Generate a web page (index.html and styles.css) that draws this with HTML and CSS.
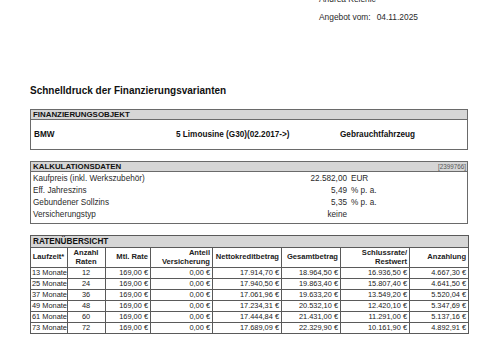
FILE: index.html
```html
<!DOCTYPE html>
<html lang="de">
<head>
<meta charset="utf-8">
<link rel="stylesheet" href="styles.css">
</head>
<body>
<div class="page">
  <div class="meta">
    <div class="name">Andrea Kelenic</div>
    <div class="date"><span>Angebot vom:</span><span class="dval">04.11.2025</span></div>
  </div>
  <h1 class="title">Schnelldruck der Finanzierungsvarianten</h1>

  <section class="box">
    <div class="box-head"><span>FINANZIERUNGSOBJEKT</span></div>
    <div class="obj">
      <span>BMW</span>
      <span>5 Limousine (G30)(02.2017-&gt;)</span>
      <span>Gebrauchtfahrzeug</span>
    </div>
  </section>

  <section class="box">
    <div class="box-head"><span>KALKULATIONSDATEN</span><span class="ref">[2399766]</span></div>
    <div class="calc">
      <span>Kaufpreis (inkl. Werkszubehör)</span><span class="v">22.582,00</span><span>EUR</span>
      <span>Eff. Jahreszins</span><span class="v">5,49</span><span>% p. a.</span>
      <span>Gebundener Sollzins</span><span class="v">5,35</span><span>% p. a.</span>
      <span>Versicherungstyp</span><span class="v">keine</span><span></span>
    </div>
  </section>

  <table class="rates">
    <colgroup>
      <col style="width:37px"><col style="width:38px"><col style="width:45px"><col style="width:62px">
      <col style="width:69px"><col style="width:59px"><col style="width:69px"><col style="width:59px">
    </colgroup>
    <thead>
      <tr><th colspan="8" class="rt">RATENÜBERSICHT</th></tr>
      <tr class="ch">
        <th class="c">Laufzeit*</th>
        <th class="c">Anzahl<br>Raten</th>
        <th>Mtl. Rate</th>
        <th>Anteil<br>Versicherung</th>
        <th>Nettokreditbetrag</th>
        <th>Gesamtbetrag</th>
        <th>Schlussrate/<br>Restwert</th>
        <th>Anzahlung</th>
      </tr>
    </thead>
    <tbody>
      <tr><td class="l">13 Monate</td><td class="c">12</td><td>169,00 €</td><td>0,00 €</td><td>17.914,70 €</td><td>18.964,50 €</td><td>16.936,50 €</td><td>4.667,30 €</td></tr>
      <tr><td class="l">25 Monate</td><td class="c">24</td><td>169,00 €</td><td>0,00 €</td><td>17.940,50 €</td><td>19.863,40 €</td><td>15.807,40 €</td><td>4.641,50 €</td></tr>
      <tr><td class="l">37 Monate</td><td class="c">36</td><td>169,00 €</td><td>0,00 €</td><td>17.061,96 €</td><td>19.633,20 €</td><td>13.549,20 €</td><td>5.520,04 €</td></tr>
      <tr><td class="l">49 Monate</td><td class="c">48</td><td>169,00 €</td><td>0,00 €</td><td>17.234,31 €</td><td>20.532,10 €</td><td>12.420,10 €</td><td>5.347,69 €</td></tr>
      <tr><td class="l">61 Monate</td><td class="c">60</td><td>169,00 €</td><td>0,00 €</td><td>17.444,84 €</td><td>21.431,00 €</td><td>11.291,00 €</td><td>5.137,16 €</td></tr>
      <tr><td class="l">73 Monate</td><td class="c">72</td><td>169,00 €</td><td>0,00 €</td><td>17.689,09 €</td><td>22.329,90 €</td><td>10.161,90 €</td><td>4.892,91 €</td></tr>
    </tbody>
  </table>
</div>
</body>
</html>
```
FILE: styles.css
```css
html, body {
  margin: 0;
  padding: 0;
  background: #fff;
}
body {
  width: 487px;
  height: 341px;
  overflow: hidden;
  font-family: "Liberation Sans", Arial, sans-serif;
  color: #1a1a1a;
}
.page {
  padding: 0 19px 0 30px;
}
.meta {
  margin-top: -6px;
  padding-left: 289px;
  font-size: 8.4px;
  line-height: 10px;
  color: #2a2a2a;
}
.date {
  margin-top: 8px;
  display: flex;
  gap: 6px;
}
.title {
  margin: 63px 0 12px;
  font-size: 10px;
  line-height: 12px;
  font-weight: bold;
  color: #111;
}
.box {
  border: 1px solid #6a6a6a;
  margin-bottom: 11px;
}
.box-head {
  height: 9px;
  background: #d6d6d6;
  border-bottom: 1px solid #6a6a6a;
  display: flex;
  justify-content: space-between;
  align-items: center;
  padding: 0 1px 0 2px;
  font-size: 7.9px;
  font-weight: bold;
  line-height: 9px;
  color: #111;
}
.ref {
  font-size: 6.3px;
  font-weight: normal;
  color: #555;
}
.obj {
  height: 29px;
  display: grid;
  grid-template-columns: 142px 164px 1fr;
  align-items: center;
  padding-left: 3px;
  font-size: 8.2px;
  font-weight: bold;
  color: #111;
}
.calc {
  display: grid;
  grid-template-columns: 226px 84px 1fr;
  column-gap: 4px;
  padding: 1px 0 2px 2px;
  font-size: 8.2px;
  line-height: 12px;
  color: #2a2a2a;
}
.calc .v {
  text-align: right;
}
.rates {
  width: 438px;
  table-layout: fixed;
  border-collapse: collapse;
  border: 1px solid #5a5a5a;
  font-size: 7.4px;
  color: #222;
}
.rates th, .rates td {
  border: 1px solid #5a5a5a;
  padding: 0 2px 0 1px;
  text-align: right;
  white-space: nowrap;
  overflow: hidden;
}
.rates th {
  font-weight: bold;
}
.rates .rt {
  height: 11px;
  line-height: 11px;
  background: #d6d6d6;
  text-align: left;
  font-size: 8.2px;
  padding-left: 2px;
  color: #111;
}
.rates .ch th {
  height: 19px;
  line-height: 8.5px;
  font-size: 7.6px;
  vertical-align: middle;
  color: #222;
}
.rates td {
  height: 10px;
  line-height: 10px;
}
.rates .c {
  text-align: center;
}
.rates .l {
  text-align: left;
}
```
